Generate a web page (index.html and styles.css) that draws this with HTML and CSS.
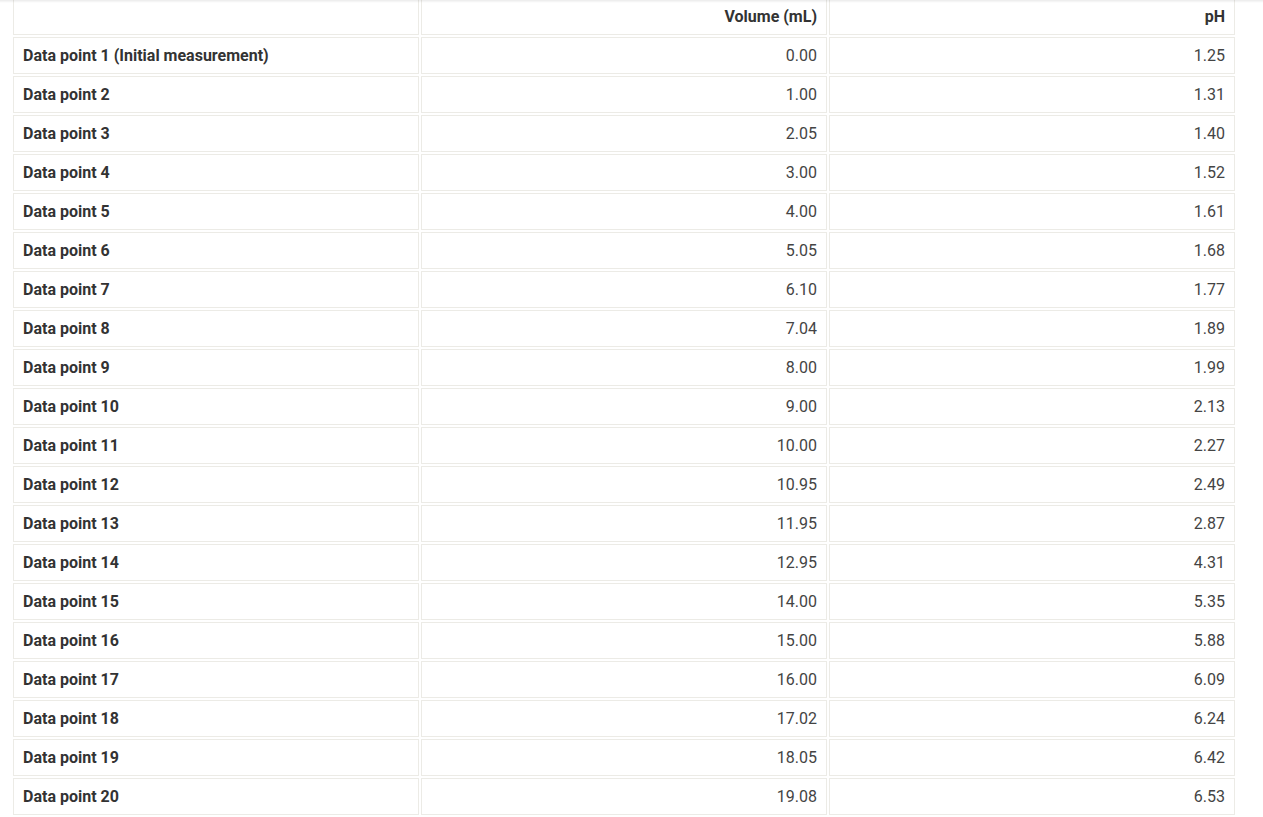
FILE: index.html
```html
<!DOCTYPE html>
<html lang="en">

<head>
    <meta charset="UTF-8">
    <meta name="viewport" content="width=device-width, initial-scale=1.0">
    <title>Titration Data</title>
    <link rel="stylesheet" href="styles.css">
</head>

<body>
    <div class="top-shadow"></div>
    <div class="wrapper">
        <table class="data-table">
            <thead>
                <tr>
                    <th></th>
                    <th>Volume (mL)</th>
                    <th>pH</th>
                </tr>
            </thead>
            <tbody>
                <tr><th>Data point 1 (Initial measurement)</th><td>0.00</td><td>1.25</td></tr>
                <tr><th>Data point 2</th><td>1.00</td><td>1.31</td></tr>
                <tr><th>Data point 3</th><td>2.05</td><td>1.40</td></tr>
                <tr><th>Data point 4</th><td>3.00</td><td>1.52</td></tr>
                <tr><th>Data point 5</th><td>4.00</td><td>1.61</td></tr>
                <tr><th>Data point 6</th><td>5.05</td><td>1.68</td></tr>
                <tr><th>Data point 7</th><td>6.10</td><td>1.77</td></tr>
                <tr><th>Data point 8</th><td>7.04</td><td>1.89</td></tr>
                <tr><th>Data point 9</th><td>8.00</td><td>1.99</td></tr>
                <tr><th>Data point 10</th><td>9.00</td><td>2.13</td></tr>
                <tr><th>Data point 11</th><td>10.00</td><td>2.27</td></tr>
                <tr><th>Data point 12</th><td>10.95</td><td>2.49</td></tr>
                <tr><th>Data point 13</th><td>11.95</td><td>2.87</td></tr>
                <tr><th>Data point 14</th><td>12.95</td><td>4.31</td></tr>
                <tr><th>Data point 15</th><td>14.00</td><td>5.35</td></tr>
                <tr><th>Data point 16</th><td>15.00</td><td>5.88</td></tr>
                <tr><th>Data point 17</th><td>16.00</td><td>6.09</td></tr>
                <tr><th>Data point 18</th><td>17.02</td><td>6.24</td></tr>
                <tr><th>Data point 19</th><td>18.05</td><td>6.42</td></tr>
                <tr><th>Data point 20</th><td>19.08</td><td>6.53</td></tr>
            </tbody>
        </table>
    </div>
</body>

</html>
```

FILE: styles.css
```css
body {
    margin: 0;
    font-family: Roboto, "Liberation Sans", Arial, sans-serif;
    font-size: 16px;
    color: #333;
    background-color: #fff;
}

.top-shadow {
    position: fixed;
    top: 0;
    left: 0;
    right: 0;
    height: 3px;
    background: linear-gradient(rgba(0, 0, 0, 0.08), rgba(0, 0, 0, 0));
    z-index: 1;
}

.wrapper {
    padding: 0 26px 0 11px;
    margin-top: -4px;
}

.data-table {
    width: 100%;
    border-collapse: separate;
    border-spacing: 2px;
    table-layout: fixed;
}

.data-table th,
.data-table td {
    border: 1px solid #ecebe6;
    padding: 8px 9px;
    line-height: 19px;
    text-align: right;
}

.data-table th {
    font-weight: bold;
    color: #333;
}

.data-table tbody th {
    text-align: left;
}

.data-table td {
    color: #444;
}
```
